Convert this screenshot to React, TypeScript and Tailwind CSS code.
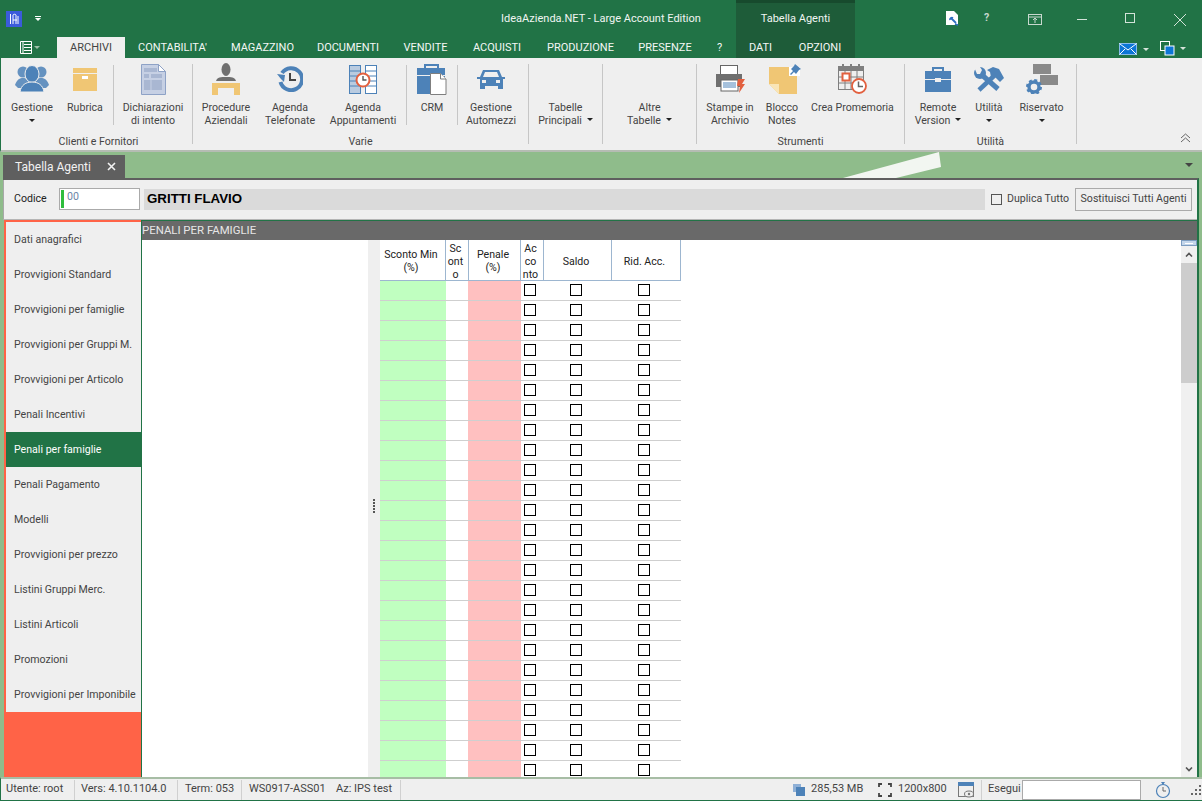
import React from "react";

const BLUE = "#4d82b8";
const TAN = "#f0c674";
const GREY = "#7f7f7f";
const RED = "#e2603f";

const Arrow = ({ c = "#222" }: { c?: string }) => (
  <svg width="6" height="3" viewBox="0 0 6 3" className="inline-block">
    <path d="M0 0h6L3 3z" fill={c} />
  </svg>
);

const IconUsers = () => (
  <svg width="34" height="28" viewBox="0 0 34 28">
    <g fill={BLUE} opacity="0.85">
      <circle cx="8" cy="7" r="5.5" />
      <circle cx="26" cy="7" r="5.5" />
      <path d="M0 20c2-6 5-7 8-7s6 1 8 7l-4 3H3z" />
      <path d="M18 20c2-6 5-7 8-7s6 1 8 7l-3 3H22z" />
    </g>
    <g fill={BLUE} stroke="#efefef" strokeWidth="1">
      <ellipse cx="17" cy="9" rx="7" ry="8.5" />
      <path d="M5 27c1-7 6-10 12-10s11 3 12 10z" />
    </g>
  </svg>
);
const IconBox = () => (
  <svg width="24" height="23" viewBox="0 0 24 23">
    <rect x="0" y="0" width="24" height="5" fill={TAN} />
    <rect x="0" y="6" width="24" height="17" fill={TAN} />
    <rect x="9" y="8" width="6" height="3" fill="#fff" />
  </svg>
);
const IconDoc = () => (
  <svg width="25" height="31" viewBox="0 0 25 31">
    <path d="M.5.5h17l7 7v23H.5z" fill="#c6d0e4" stroke="#8ea2c6" />
    <path d="M17.5.5v7h7z" fill="#fff" stroke="#8ea2c6" />
    <path d="M3 4h13v4H3zM3 10h5v4H3zM10 10h11v4H10zM3 16h18v10H3z" fill="#a9b7d2" />
    <path d="M10 16v10" stroke="#c6d0e4" />
  </svg>
);
const IconProcedure = () => (
  <svg width="28" height="32" viewBox="0 0 28 32">
    <ellipse cx="14" cy="6.5" rx="4.5" ry="6.5" fill="#6f6f6f" />
    <path d="M4 18c1-4 5-4 10-4s9 0 10 4z" fill="#6f6f6f" />
    <path d="M0 20h28v12h-6v-7H6v7H0z" fill={TAN} />
  </svg>
);
const IconHistory = () => (
  <svg width="26" height="26" viewBox="0 0 26 26">
    <path d="M5 7a11 11 0 1 1-1.5 9" fill="none" stroke={BLUE} strokeWidth="4" />
    <path d="M0 7l8 1-1 7-3-3z" fill={BLUE} transform="translate(0 1)" />
    <path d="M13 7v7h6" fill="none" stroke="#444" strokeWidth="2" />
  </svg>
);
const IconAppt = () => (
  <svg width="28" height="29" viewBox="0 0 28 29">
    <rect x=".5" y=".5" width="11" height="28" fill="#b9cbe0" stroke={BLUE} />
    <rect x="16.5" y=".5" width="11" height="28" fill="#fff" stroke={BLUE} />
    <path d="M1 6h10M1 11h10M1 16h10M1 21h10M17 6h10M17 11h10M17 16h10M17 21h10" stroke={BLUE} />
    <circle cx="14" cy="15" r="6.5" fill="#fff" stroke={RED} strokeWidth="2" />
    <path d="M14 11v4h3.5" fill="none" stroke="#555" strokeWidth="1.4" />
  </svg>
);
const IconCrm = () => (
  <svg width="30" height="31" viewBox="0 0 30 31">
    <path d="M8 4V1h13v3" fill="none" stroke={BLUE} strokeWidth="2" />
    <rect x="0" y="4" width="28" height="7" fill={BLUE} />
    <rect x="0" y="12" width="28" height="18" fill={BLUE} />
    <path d="M13.5 9.5h10l5.5 5.5v15.5H13.5z" fill="#fff" stroke={GREY} />
    <path d="M23.5 9.5v5.5h5.5" fill="#fff" stroke={GREY} />
  </svg>
);
const IconCar = () => (
  <svg width="28" height="20" viewBox="0 0 28 20">
    <path d="M6 1h16l3 7h3v2h-2v10h-5v-3H8v3H3V10H0V8h3z" fill={BLUE} />
    <path d="M8 3h12l2 5H6z" fill="#efefef" />
    <rect x="5" y="11" width="4" height="3" fill="#efefef" />
    <rect x="19" y="11" width="4" height="3" fill="#efefef" />
  </svg>
);
const IconPrint = () => (
  <svg width="29" height="28" viewBox="0 0 29 28">
    <rect x="4.5" y=".5" width="17" height="9" fill="#fff" stroke="#666" />
    <rect x="0" y="9" width="26" height="13" fill="#6f6f6f" />
    <rect x="5" y="15" width="17" height="11" fill="#fff" stroke="#666" />
    <path d="M7 18h13M7 20h13M7 22h13" stroke={BLUE} />
    <path d="M22 14h7l-3 5h3l-6 9 1-7h-3z" fill={RED} />
  </svg>
);
const IconNote = () => (
  <svg width="32" height="31" viewBox="0 0 32 31">
    <path d="M0 3h28v27H10L0 20z" fill={TAN} />
    <path d="M0 20h10v10z" fill="#f9e5b7" />
    <path d="M20 3h11v9H20z" fill="#fff" />
    <path d="M26 0l6 5-2 1-3 4-2-2-3 3-1-1 3-3-2-2 3-3z" fill={BLUE} />
  </svg>
);
const IconCal = () => (
  <svg width="30" height="30" viewBox="0 0 30 30">
    <rect x=".5" y="2.5" width="25" height="23" fill="#efefef" stroke={GREY} />
    <rect x="0" y="2" width="26" height="5" fill={GREY} />
    <path d="M5 0v4M13 0v4M21 0v4" stroke={GREY} strokeWidth="2" />
    <path d="M7 7v18M13 7v18M19 7v18M1 13h24M1 19h24" stroke={GREY} />
    <rect x="4.5" y="9.5" width="7" height="7" fill="#fff" stroke={RED} strokeWidth="2" />
    <circle cx="21" cy="22" r="7" fill="#fff" stroke={RED} strokeWidth="1.8" />
    <path d="M20.5 17.5v5h4.5" fill="none" stroke="#666" strokeWidth="1.5" />
  </svg>
);
const IconCase = () => (
  <svg width="26" height="25" viewBox="0 0 26 25">
    <path d="M8 4V1h10v3" fill="none" stroke={BLUE} strokeWidth="2" />
    <path d="M0 4h26v8H16v-1h-6v1H0z" fill={BLUE} />
    <path d="M0 13h10v2h6v-2h10v12H0z" fill={BLUE} />
  </svg>
);
const IconTools = () => (
  <svg width="30" height="25" viewBox="0 0 30 25">
    <path d="M21 8L5 23" stroke={BLUE} strokeWidth="4.5" fill="none" />
    <path d="M13 3l6-3 6 2 5 9-4 4-5-5-4 0-1-5z" fill={BLUE} />
    <path d="M8 8l16 14" stroke={BLUE} strokeWidth="5" fill="none" />
    <circle cx="6" cy="6" r="6" fill={BLUE} />
    <path d="M0 0h6l2 3-2 4-3 0z" fill="#efefef" />
  </svg>
);
const IconRes = () => (
  <svg width="32" height="30" viewBox="0 0 32 30">
    <rect x="7" y="0" width="18" height="10" fill="#8a8a8a" />
    <rect x="14" y="11" width="18" height="10" fill="#8a8a8a" />
    <circle cx="8" cy="23" r="5" fill="none" stroke={BLUE} strokeWidth="3.4" />
    <circle cx="8" cy="23" r="7" fill="none" stroke={BLUE} strokeWidth="2" strokeDasharray="3 2.5" />
  </svg>
);

type Item = { w: number; icon?: React.ReactNode; lines: string[]; arrow?: "below" | "inline" };

const RibbonItem = ({ it }: { it: Item }) => (
  <div className="flex flex-col items-center shrink-0" style={{ width: it.w }}>
    <div className="h-[42px] mb-px flex items-center justify-center">{it.icon}</div>
    <div className="text-center leading-[13px] whitespace-nowrap">
      {it.lines.map((l, i) => (
        <div key={i}>
          {l}
          {it.arrow === "inline" && i === it.lines.length - 1 && (
            <span className="ml-[5px] relative top-[-2px]">
              <Arrow />
            </span>
          )}
        </div>
      ))}
      {it.arrow === "below" && (
        <div className="h-[13px] flex items-center justify-center">
          <Arrow />
        </div>
      )}
    </div>
  </div>
);

const InnerSep = () => <div className="w-px h-[60px] mt-[7px] bg-[#c6c6c6] shrink-0" />;

const Group = ({ w, label, children }: { w: number; label?: string; children: React.ReactNode }) => (
  <div className="flex shrink-0 h-[92px]">
    <div className="flex flex-col" style={{ width: w }}>
      <div className="flex h-[75px]">{children}</div>
      <div className="text-center leading-[13px] mt-[2px]">{label}</div>
    </div>
    <div className="w-px h-[80px] mt-[6px] bg-[#c6c6c6] shrink-0" />
  </div>
);

const topTabs: [string, number][] = [
  ["CONTABILITA'", 95],
  ["MAGAZZINO", 85],
  ["DOCUMENTI", 86],
  ["VENDITE", 69],
  ["ACQUISTI", 74],
  ["PRODUZIONE", 93],
  ["PRESENZE", 76],
  ["?", 33],
];

const navItems = [
  "Dati anagrafici",
  "Provvigioni Standard",
  "Provvigioni per famiglie",
  "Provvigioni per Gruppi M.",
  "Provvigioni per Articolo",
  "Penali Incentivi",
  "Penali per famiglie",
  "Penali Pagamento",
  "Modelli",
  "Provvigioni per prezzo",
  "Listini Gruppi Merc.",
  "Listini Articoli",
  "Promozioni",
  "Provvigioni per Imponibile",
];

const Check = () => <div className="w-[12px] h-[12px] border border-black bg-white" />;

const rows = Array.from({ length: 25 }, (_, i) => i);

const HCell = ({ w, children }: { w: number; children: React.ReactNode }) => (
  <div
    className="shrink-0 h-full flex items-center justify-center text-center leading-[13px] text-[#222] border-r border-[#9db6d0] pt-[2px] pr-[3px]"
    style={{ width: w }}
  >
    <div>{children}</div>
  </div>
);

const StatusSep = () => <div className="w-px h-[20px] bg-[#d0d0d0] shrink-0" />;

export default function App() {
  return (
    <div
      className="relative w-[1202px] h-[801px] overflow-hidden flex flex-col bg-[#8fbc8b] text-[10.6px] text-[#444]"
      style={{ fontFamily: "Roboto, sans-serif" }}
    >
      {/* Title bar */}
      <div className="bg-[#217346] h-[58px] shrink-0 flex flex-col text-white relative">
        <div className="h-[37px] flex items-center relative">
          <div className="ml-[6px] w-[16px] h-[16px] bg-[#3b5bdb] flex items-center justify-center">
            <svg width="10" height="12" viewBox="0 0 10 12">
              <path d="M1.5 1v10M4 11V2c0-1 3-1 3 0v9M9 11V3M4 7h4" stroke="#fff" strokeWidth="1" fill="none" />
            </svg>
          </div>
          <div className="ml-[13px] flex flex-col items-center">
            <div className="w-[6px] h-px bg-white mb-px" />
            <Arrow c="#fff" />
          </div>
          <div className="absolute left-0 right-0 top-[12px] text-center text-[11px] leading-[13px] text-[#f0f5f2] pointer-events-none">
            IdeaAzienda.NET - Large Account Edition
          </div>
          <div className="absolute left-[736px] top-0 w-[119px] h-[37px] bg-[#1e5c39] border-t-[3px] border-[#174a2d] text-center text-[11px] text-[#f0f5f2] pt-[9px] leading-[13px]">
            Tabella Agenti
          </div>
          {/* window buttons */}
          <svg className="absolute left-[945px] top-[11px]" width="15" height="15" viewBox="0 0 15 15">
            <path d="M1 0h8l4 4v10H1z" fill="#fff" />
            <path d="M6 7l5 5M8 7a2 2 0 0 0-3 2M10 13l3 1" stroke="#2f6fc0" strokeWidth="1.8" fill="none" />
          </svg>
          <div className="absolute left-[984px] top-[11px] text-[#c8d8ce] font-bold leading-[14px]">?</div>
          <svg className="absolute left-[1028px] top-[14px]" width="14" height="11" viewBox="0 0 14 11">
            <rect x=".5" y=".5" width="13" height="10" fill="none" stroke="#c8d8ce" />
            <path d="M1 3h12M7 9V4.5M5 6l2-2 2 2" stroke="#c8d8ce" fill="none" />
          </svg>
          <div className="absolute left-[1077px] top-[19px] w-[10px] h-px bg-[#d3e3d9]" />
          <div className="absolute left-[1125px] top-[13px] w-[10px] h-[10px] border border-[#d3e3d9]" />
          <svg className="absolute left-[1173px] top-[13px]" width="15" height="15" viewBox="0 0 15 15">
            <path d="M1 1l12 12M13 1L1 13" stroke="#d3e3d9" />
          </svg>
        </div>
        <div className="h-[21px] flex items-stretch leading-[21px] text-[11px] relative">
          <div className="w-[57px] flex items-center pl-[20px] gap-[2px]">
            <svg width="12" height="13" viewBox="0 0 12 13">
              <path d="M.5.5h11v12H.5zM3 1v11M4 3.5h7M4 6.5h7M4 9.5h7" stroke="#fff" fill="none" />
            </svg>
            <Arrow c="#9fbfa9" />
          </div>
          <div className="w-[68px] bg-[#efefef] text-[#444] text-center">ARCHIVI</div>
          {topTabs.map(([t, w]) => (
            <div key={t} className="text-center text-[#f4f7f5]" style={{ width: w }}>
              {t}
            </div>
          ))}
          <div className="w-[49px] bg-[#1e5c39] text-center text-[#f4f7f5]">DATI</div>
          <div className="w-[70px] bg-[#1e5c39] text-center text-[#f4f7f5]">OPZIONI</div>
          <div className="absolute left-[1119px] top-[6px] flex items-center gap-[6px]">
            <svg width="18" height="12" viewBox="0 0 18 12">
              <rect width="18" height="12" fill="#0c76d6" stroke="#fff" />
              <path d="M1 1l8 6 8-6M1 11l5-5M17 11l-5-5" stroke="#fff" fill="none" />
            </svg>
            <Arrow c="#d5e3da" />
          </div>
          <div className="absolute left-[1160px] top-[4px] flex items-center gap-[5px]">
            <svg width="15" height="15" viewBox="0 0 15 15">
              <rect x=".5" y=".5" width="9" height="9" fill="#217346" stroke="#fff" />
              <rect x="5" y="5" width="9" height="9" fill="#0c76d6" stroke="#fff" />
            </svg>
            <Arrow c="#d5e3da" />
          </div>
        </div>
      </div>

      {/* Ribbon */}
      <div className="h-[94px] shrink-0 bg-[#efefef] border-b-2 border-[#b5bcb3] border-l border-l-[#217346] flex relative pl-[4px]">
        <Group w={187} label="Clienti e Fornitori">
          <RibbonItem it={{ w: 54, icon: <IconUsers />, lines: ["Gestione"], arrow: "below" }} />
          <RibbonItem it={{ w: 52, icon: <IconBox />, lines: ["Rubrica"] }} />
          <div className="ml-[2px]"><InnerSep /></div>
          <RibbonItem it={{ w: 78, icon: <IconDoc />, lines: ["Dichiarazioni", "di intento"] }} />
        </Group>
        <Group w={335} label="Varie">
          <RibbonItem it={{ w: 66, icon: <IconProcedure />, lines: ["Procedure", "Aziendali"] }} />
          <RibbonItem it={{ w: 62, icon: <IconHistory />, lines: ["Agenda", "Telefonate"] }} />
          <RibbonItem it={{ w: 84, icon: <IconAppt />, lines: ["Agenda", "Appuntamenti"] }} />
          <div className="ml-[1px]"><InnerSep /></div>
          <RibbonItem it={{ w: 50, icon: <IconCrm />, lines: ["CRM"] }} />
          <InnerSep />
          <RibbonItem it={{ w: 66, icon: <IconCar />, lines: ["Gestione", "Automezzi"] }} />
        </Group>
        <Group w={73}>
          <RibbonItem it={{ w: 73, lines: ["Tabelle", "Principali"], arrow: "inline" }} />
        </Group>
        <Group w={93}>
          <RibbonItem it={{ w: 93, lines: ["Altre", "Tabelle"], arrow: "inline" }} />
        </Group>
        <Group w={207} label="Strumenti">
          <RibbonItem it={{ w: 66, icon: <IconPrint />, lines: ["Stampe in", "Archivio"] }} />
          <RibbonItem it={{ w: 38, icon: <div className="ml-[6px]"><IconNote /></div>, lines: ["Blocco", "Notes"] }} />
          <RibbonItem it={{ w: 103, icon: <IconCal />, lines: ["Crea Promemoria"] }} />
        </Group>
        <Group w={171} label="Utilità">
          <RibbonItem it={{ w: 66, icon: <IconCase />, lines: ["Remote", "Version"], arrow: "inline" }} />
          <RibbonItem it={{ w: 36, icon: <IconTools />, lines: ["Utilità"], arrow: "below" }} />
          <RibbonItem it={{ w: 69, icon: <IconRes />, lines: ["Riservato"], arrow: "below" }} />
        </Group>
        <svg className="absolute left-[1179px] top-[75px]" width="11" height="10" viewBox="0 0 11 10">
          <path d="M1 5l4.5-4L10 5M1 9l4.5-4L10 9" fill="none" stroke="#666" />
        </svg>
      </div>

      {/* Tab band */}
      <div className="h-[26px] shrink-0 relative flex items-end pl-[3px]">
        <div className="w-[122px] h-[23px] bg-[#5f5f5f] text-[#f2f2f2] flex items-center pl-[12px] text-[12px]">
          <span className="w-[92px]">Tabella Agenti</span>
          <svg width="9" height="9" viewBox="0 0 9 9">
            <path d="M1 1l7 7M8 1L1 8" stroke="#f2f2f2" strokeWidth="1.6" />
          </svg>
        </div>
        <svg className="absolute left-[842px] top-0" width="100" height="26" viewBox="0 0 100 26">
          <path d="M1 26L97 0l2 15-45 11z" fill="#f2f6f1" />
        </svg>
        <svg className="absolute left-[1185px] top-[11px]" width="8" height="4" viewBox="0 0 8 4">
          <path d="M0 0h8L4 4z" fill="#444" />
        </svg>
      </div>

      {/* Main */}
      <div className="flex-1 min-h-0 flex flex-col ml-[3px] mr-[3px] border-t-2 border-[#5f5f5f] border-r-2 border-r-[#217346]">
        <div className="h-[40px] shrink-0 bg-[#efefef] border-l border-[#a8a8a8] flex items-center pl-[10px] pr-[5px] pb-px border-b border-b-[#b5b5b5]">
          <span className="w-[45px] text-[#222]">Codice</span>
          <div className="w-[81px] h-[22px] bg-white border border-[#aaa] flex items-stretch py-[1px] pl-[1px]">
            <div className="w-[3px] bg-[#2ebd3c]" />
            <span className="ml-[3px] text-[#6c86a8] leading-[13px]">00</span>
          </div>
          <div
            className="ml-[4px] w-[841px] h-[21px] bg-[#dadada] pl-[3px] flex items-center font-bold text-[13.3px] text-black"
            style={{ fontFamily: '"Liberation Sans", sans-serif' }}
          >
            GRITTI FLAVIO
          </div>
          <div className="ml-[6px] w-[11px] h-[11px] border border-[#555] bg-[#efefef]" />
          <span className="ml-[5px] w-[68px] whitespace-nowrap">Duplica Tutto</span>
          <div className="w-[117px] h-[23px] border border-[#aaa] flex items-center justify-center whitespace-nowrap">
            Sostituisci Tutti Agenti
          </div>
        </div>
        <div className="flex-1 min-h-0 flex bg-[#8fbc8b]">
          {/* Nav */}
          <div className="w-[137px] ml-px shrink-0 bg-[#ff6347] pl-[2px] pt-[2px] flex flex-col">
            {navItems.map((n) => (
              <div
                key={n}
                className={`h-[35px] shrink-0 flex items-center pl-[8px] pt-px whitespace-nowrap ${
                  n === "Penali per famiglie" ? "bg-[#217346] text-white" : "bg-[#efefef] text-[#444]"
                }`}
              >
                {n}
              </div>
            ))}
          </div>
          {/* Content */}
          <div className="flex-1 min-w-0 flex flex-col bg-white border-l border-[#217346] border-t border-t-[#217346] overflow-hidden">
            <div className="h-[19px] shrink-0 bg-[#696969] text-[#e6e6e6] leading-[19px] text-[11.4px] whitespace-nowrap">
              PENALI PER FAMIGLIE
            </div>
            <div className="flex-1 min-h-0 flex">
              <div className="w-[226px] shrink-0" />
              <div className="w-[12px] shrink-0 bg-[#efefef] flex flex-col items-center justify-center gap-px pb-[6px]">
                {[0, 1, 2, 3, 4].map((i) => (
                  <div key={i} className="w-[2px] h-[2px] bg-[#555]" />
                ))}
              </div>
              <div className="w-[301px] shrink-0 overflow-hidden">
                <div className="h-[41px] flex border-b border-[#9db6d0]">
                  <HCell w={66}>Sconto Min<br />(%)</HCell>
                  <HCell w={23}>Sc<br />ont<br />o</HCell>
                  <HCell w={52}>Penale<br />(%)</HCell>
                  <HCell w={23}>Ac<br />co<br />nto</HCell>
                  <HCell w={68}>Saldo</HCell>
                  <HCell w={69}>Rid. Acc.</HCell>
                </div>
                {rows.map((r) => (
                  <div key={r} className="h-[20px] flex border-b border-[#cfcfcf]">
                    <div className="w-[66px] bg-[#c0ffc0]" />
                    <div className="w-[22px]" />
                    <div className="w-[53px] bg-[#ffc0c0]" />
                    <div className="w-[22px] pl-[3px] pt-[3px]"><Check /></div>
                    <div className="w-[68px] pl-[27px] pt-[3px]"><Check /></div>
                    <div className="w-[70px] pl-[27px] pt-[3px]"><Check /></div>
                  </div>
                ))}
              </div>
              <div className="flex-1" />
              {/* Scrollbar */}
              <div className="w-[16px] shrink-0 bg-[#f0f0f0] flex flex-col items-center">
                <div className="w-full h-[6px] bg-[#c4d6ea] border border-[#7c9cc0] flex items-center justify-center">
                  <div className="w-[8px] h-px bg-white" />
                </div>
                <div className="h-[17px] flex items-center">
                  <svg width="8" height="5" viewBox="0 0 8 5"><path d="M1 4.5l3-3 3 3" fill="none" stroke="#555" strokeWidth="1.6" /></svg>
                </div>
                <div className="w-full h-[120px] bg-[#cdcdcd]" />
                <div className="flex-1" />
                <div className="h-[15px] flex items-center">
                  <svg width="8" height="5" viewBox="0 0 8 5"><path d="M1 .5l3 3 3-3" fill="none" stroke="#555" strokeWidth="1.6" /></svg>
                </div>
              </div>
            </div>
          </div>
        </div>
      </div>

      {/* Status */}
      <div className="h-[24px] shrink-0 bg-[#efefef] border-t-2 border-[#a7bda5] border-b border-b-[#217346] border-l border-l-[#217346] flex items-center relative whitespace-nowrap text-[11px]">
        <span className="w-[73px] pl-[5px]">Utente: root</span>
        <StatusSep />
        <span className="w-[102px] pl-[6px]">Vers: 4.10.1104.0</span>
        <StatusSep />
        <span className="w-[63px] pl-[7px]">Term: 053</span>
        <StatusSep />
        <span className="w-[94px] pl-[7px]">WS0917-ASS01</span>
        <span className="w-[64px]">Az: IPS test</span>
        <StatusSep />
        <div className="flex-1" />
        <svg width="12" height="12" viewBox="0 0 12 12" className="shrink-0">
          <rect width="8" height="8" fill="#8fb0d6" />
          <rect x="3" y="3" width="9" height="9" fill={BLUE} />
        </svg>
        <span className="w-[73px] pl-[6px] shrink-0">285,53 MB</span>
        <svg width="14" height="14" viewBox="0 0 14 14" className="shrink-0">
          <path d="M1 4V1h3M10 1h3v3M13 10v3h-3M4 13H1v-3" fill="none" stroke="#444" strokeWidth="1.8" />
        </svg>
        <span className="w-[66px] pl-[6px] shrink-0">1200x800</span>
        <svg width="16" height="16" viewBox="0 0 16 16" className="shrink-0">
          <rect x=".5" y=".5" width="15" height="14" fill="#efefef" stroke="#777" />
          <rect x="0" y="0" width="16" height="4" fill={BLUE} />
          <ellipse cx="11" cy="12" rx="4.5" ry="3" fill="#efefef" stroke="#777" />
          <circle cx="11" cy="12" r="1.2" fill="#777" />
        </svg>
        <div className="ml-[7px]"><StatusSep /></div>
        <span className="w-[40px] pl-[6px] shrink-0">Esegui</span>
        <div className="w-[119px] h-[20px] bg-white border border-[#aaa] shrink-0" />
        <svg width="16" height="18" viewBox="0 0 16 18" className="ml-[14px] shrink-0">
          <circle cx="8" cy="10" r="6.5" fill="none" stroke={BLUE} strokeWidth="1.2" />
          <path d="M8 6v4h3" fill="none" stroke="#666" />
          <path d="M6 1h4L8 4z" fill={BLUE} />
        </svg>
        <svg width="12" height="12" viewBox="0 0 12 12" className="ml-[19px] shrink-0">
          <path d="M9 1h2v2H9zM5 5h2v2H5zM9 5h2v2H9zM1 9h2v2H1zM5 9h2v2H5zM9 9h2v2H9z" fill="#666" />
        </svg>
      </div>
    </div>
  );
}
